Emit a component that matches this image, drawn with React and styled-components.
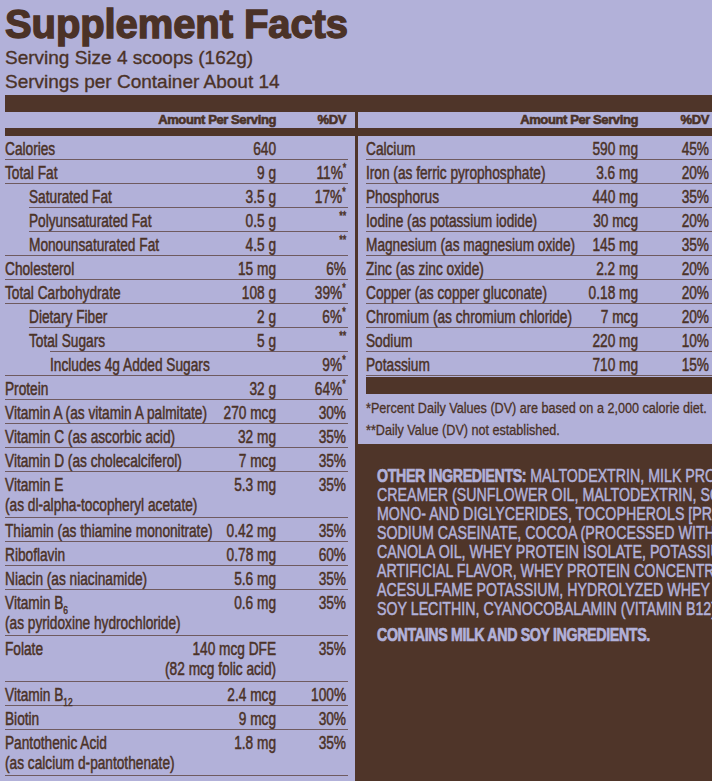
import React from 'react';
import styled, { createGlobalStyle } from 'styled-components';

const LAV = '#b2b1d9';
const BROWN = '#4f3529';
const INK = '#4b3227';
const RULE = '#6f5b60';
const SANS = '"Liberation Sans", Arial, sans-serif';
const SQUEEZE = 0.76;

const left = [
  { name: 'Calories', amt: '640' },
  { name: 'Total Fat', amt: '9 g', dv: '11%', star: '*' },
  { name: 'Saturated Fat', amt: '3.5 g', dv: '17%', star: '*', indent: 24, rule: 24 },
  { name: 'Polyunsaturated Fat', amt: '0.5 g', star: '**', indent: 24, rule: 24 },
  { name: 'Monounsaturated Fat', amt: '4.5 g', star: '**', indent: 24 },
  { name: 'Cholesterol', amt: '15 mg', dv: '6%' },
  { name: 'Total Carbohydrate', amt: '108 g', dv: '39%', star: '*' },
  { name: 'Dietary Fiber', amt: '2 g', dv: '6%', star: '*', indent: 24, rule: 24 },
  { name: 'Total Sugars', amt: '5 g', star: '**', indent: 24, rule: 45 },
  { name: 'Includes 4g Added Sugars', dv: '9%', star: '*', indent: 45 },
  { name: 'Protein', amt: '32 g', dv: '64%', star: '*' },
  { name: 'Vitamin A (as vitamin A palmitate)', amt: '270 mcg', dv: '30%' },
  { name: 'Vitamin C (as ascorbic acid)', amt: '32 mg', dv: '35%' },
  { name: 'Vitamin D (as cholecalciferol)', amt: '7 mcg', dv: '35%' },
  { name: 'Vitamin E', sub: '(as dl-alpha-tocopheryl acetate)', amt: '5.3 mg', dv: '35%' },
  { name: 'Thiamin (as thiamine mononitrate)', amt: '0.42 mg', dv: '35%' },
  { name: 'Riboflavin', amt: '0.78 mg', dv: '60%' },
  { name: 'Niacin (as niacinamide)', amt: '5.6 mg', dv: '35%' },
  { name: 'Vitamin B', b: '6', sub: '(as pyridoxine hydrochloride)', amt: '0.6 mg', dv: '35%' },
  { name: 'Folate', amt: '140 mcg DFE', amt2: '(82 mcg folic acid)', dv: '35%' },
  { name: 'Vitamin B', b: '12', amt: '2.4 mcg', dv: '100%' },
  { name: 'Biotin', amt: '9 mcg', dv: '30%' },
  { name: 'Pantothenic Acid', sub: '(as calcium d-pantothenate)', amt: '1.8 mg', dv: '35%' },
];

const right = [
  { name: 'Calcium', amt: '590 mg', dv: '45%' },
  { name: 'Iron (as ferric pyrophosphate)', amt: '3.6 mg', dv: '20%' },
  { name: 'Phosphorus', amt: '440 mg', dv: '35%' },
  { name: 'Iodine (as potassium iodide)', amt: '30 mcg', dv: '20%' },
  { name: 'Magnesium (as magnesium oxide)', amt: '145 mg', dv: '35%' },
  { name: 'Zinc (as zinc oxide)', amt: '2.2 mg', dv: '20%' },
  { name: 'Copper (as copper gluconate)', amt: '0.18 mg', dv: '20%' },
  { name: 'Chromium (as chromium chloride)', amt: '7 mcg', dv: '20%' },
  { name: 'Sodium', amt: '220 mg', dv: '10%' },
  { name: 'Potassium', amt: '710 mg', dv: '15%' },
];

const ingredients = [
  ' MALTODEXTRIN, MILK PROTEIN CONCENTRATE, NON-DAIRY',
  'CREAMER (SUNFLOWER OIL, MALTODEXTRIN, SODIUM CASEINATE,',
  'MONO- AND DIGLYCERIDES, TOCOPHEROLS [PROTECT FRESHNESS]),',
  'SODIUM CASEINATE, COCOA (PROCESSED WITH ALKALI),',
  'CANOLA OIL, WHEY PROTEIN ISOLATE, POTASSIUM CHLORIDE,',
  'ARTIFICIAL FLAVOR, WHEY PROTEIN CONCENTRATE,',
  'ACESULFAME POTASSIUM, HYDROLYZED WHEY PROTEIN,',
  'SOY LECITHIN, CYANOCOBALAMIN (VITAMIN B12).',
];

const GlobalStyle = createGlobalStyle`
  html, body { margin: 0; padding: 0; background: ${LAV}; }
  body { font-family: ${SANS}; color: ${INK}; }
`;

const Page = styled.div`
  width: 712px;
  height: 781px;
  overflow: hidden;
  padding-left: 5px;
  box-sizing: border-box;
  display: flex;
  flex-direction: column;
`;

const Title = styled.h1`
  margin: 2px 0 0;
  font-family: ${SANS};
  font-weight: 700;
  font-size: 40px;
  line-height: 44px;
  letter-spacing: -0.1px;
  -webkit-text-stroke: 1.4px ${INK};
`;

const Serving = styled.div`
  font-size: 19px;
  line-height: 24px;
  -webkit-text-stroke: 0.35px ${INK};
`;

const Bar = styled.div`
  height: ${p => p.$h}px;
  background: ${BROWN};
  margin-top: ${p => p.$mt || 0}px;
  flex-shrink: 0;
`;

const Columns = styled.div`
  flex: 1;
  display: flex;
  min-height: 0;
`;

const LeftCol = styled.div`
  width: 350px;
  flex-shrink: 0;
  display: flex;
  flex-direction: column;
`;

const Divider = styled.div`
  width: 3px;
  background: ${BROWN};
  flex-shrink: 0;
`;

const RightCol = styled.div`
  flex: 1;
  display: flex;
  flex-direction: column;
  min-width: 0;
`;

const Panel = styled.div`
  padding-left: ${p => p.$left}px;
  padding-right: ${p => p.$right}px;
  display: flex;
  flex-direction: column;
`;

const HeadRow = styled.div`
  display: grid;
  grid-template-columns: 1fr auto ${p => p.$dv}px;
  height: 16px;
  padding-right: ${p => p.$pr}px;
  font-family: ${SANS};
  font-weight: 700;
  font-size: 13px;
  line-height: 16px;
  letter-spacing: -0.4px;
  -webkit-text-stroke: 0.6px ${INK};
  text-align: right;
`;

const Row = styled.div`
  display: flex;
  flex-direction: column;
`;

const Cells = styled.div`
  padding: 3px ${p => p.$pr}px ${p => (p.$tall ? 2 : 0)}px ${p => p.$indent}px;
  display: grid;
  grid-template-columns: 1fr auto ${p => p.$dv}px;
  font-size: 18px;
  line-height: 20px;
  -webkit-text-stroke: 0.5px ${INK};
  white-space: nowrap;
`;

const Rule = styled.div`
  height: 1px;
  margin-left: ${p => p.$from}px;
  background: ${RULE};
`;

const Cond = styled.span`
  display: inline-block;
  transform: scaleX(${p => p.$s || SQUEEZE});
  transform-origin: ${p => p.$origin || 'left'} center;
`;

const Name = styled.div`
  display: flex;
  flex-direction: column;
  align-items: flex-start;
  min-width: 0;
`;

const Amt = styled.div`
  display: flex;
  flex-direction: column;
  align-items: flex-end;
`;

const Dv = styled.div`
  display: flex;
  justify-content: flex-end;
`;

const Star = styled.span`
  font-size: 12px;
  vertical-align: super;
  line-height: 0;
`;

const Sub = styled.span`
  font-size: 11px;
  vertical-align: sub;
  line-height: 0;
`;

const Notes = styled.div`
  padding: 3px 0 3px;
  font-size: 14px;
  line-height: 22px;
  -webkit-text-stroke: 0.3px ${INK};
  white-space: nowrap;
  display: flex;
  flex-direction: column;
  align-items: flex-start;
`;

const Box = styled.div`
  background: ${LAV};
  display: flex;
  flex-direction: column;
`;

const Ingredients = styled.div`
  flex: 1;
  background: ${BROWN};
  color: ${LAV};
  padding: 23px 0 0 19px;
  overflow: hidden;
  font-size: 18px;
  line-height: 19px;
  -webkit-text-stroke: 0.5px ${LAV};
`;

const Line = styled.div`
  white-space: nowrap;
  transform: scaleX(0.79);
  transform-origin: left center;
`;

const Strong = styled.span`
  font-weight: 700;
  letter-spacing: -0.45px;
  -webkit-text-stroke: 0.7px ${LAV};
`;

const Contains = styled(Line)`
  margin-top: 7px;
  font-weight: 700;
  letter-spacing: -0.45px;
  -webkit-text-stroke: 0.7px ${LAV};
`;

function DataRow({ r, dvw, pr, ruleFrom = 0 }) {
  return (
    <Row>
      <Cells $indent={r.indent || 0} $dv={dvw} $pr={pr} $tall={!!(r.sub || r.amt2)}>
        <Name>
          <Cond>
            {r.name}
            {r.b && <Sub>{r.b}</Sub>}
          </Cond>
          {r.sub && <Cond>{r.sub}</Cond>}
        </Name>
        <Amt>
          <Cond $origin="right">{r.amt}</Cond>
          {r.amt2 && <Cond $origin="right">{r.amt2}</Cond>}
        </Amt>
        <Dv>
          <Cond $origin="right">
            {r.dv}
            {r.star && <Star>{r.star}</Star>}
          </Cond>
        </Dv>
      </Cells>
      <Rule $from={r.rule || ruleFrom} />
    </Row>
  );
}

export default function App() {
  return (
    <>
      <GlobalStyle />
      <Page>
        <Title>Supplement Facts</Title>
        <Serving>Serving Size 4 scoops (162g)</Serving>
        <Serving>Servings per Container About 14</Serving>
        <Bar $h={17} $mt={1} />
        <Columns>
          <LeftCol>
            <HeadRow $dv={70} $pr={9}>
              <span />
              <span>Amount Per Serving</span>
              <span>%DV</span>
            </HeadRow>
            <Bar $h={8} />
            <Panel $left={0} $right={7}>
              {left.map((r, i) => (
                <DataRow key={i} r={r} dvw={70} pr={2} />
              ))}
            </Panel>
          </LeftCol>
          <Divider />
          <RightCol>
            <Box>
              <HeadRow $dv={71} $pr={3}>
                <span />
                <span>Amount Per Serving</span>
                <span>%DV</span>
              </HeadRow>
              <Bar $h={8} />
              <Panel $left={8} $right={0}>
                {right.map((r, i) => (
                  <DataRow key={i} r={r} dvw={71} pr={3} />
                ))}
                <Bar $h={17} $mt={1} />
                <Notes>
                  <Cond $s={0.9}>*Percent Daily Values (DV) are based on a 2,000 calorie diet.</Cond>
                  <Cond $s={0.9}>**Daily Value (DV) not established.</Cond>
                </Notes>
              </Panel>
            </Box>
            <Ingredients>
              {ingredients.map((l, i) => (
                <Line key={i}>
                  {i === 0 && <Strong>OTHER INGREDIENTS:</Strong>}
                  {l}
                </Line>
              ))}
              <Contains>CONTAINS MILK AND SOY INGREDIENTS.</Contains>
            </Ingredients>
          </RightCol>
        </Columns>
      </Page>
    </>
  );
}
